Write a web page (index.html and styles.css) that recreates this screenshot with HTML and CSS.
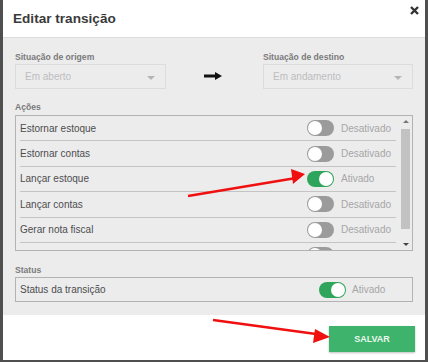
FILE: index.html
```html
<!DOCTYPE html>
<html lang="pt">
<head>
<meta charset="utf-8">
<link rel="stylesheet" href="styles.css">
</head>
<body>
<div class="modal">
  <div class="modal-header">
    <h1 class="title">Editar transição</h1>
    <svg class="close" width="9" height="9" viewBox="0 0 9 9"><path d="M1 1 L8 8 M8 1 L1 8" stroke="#333" stroke-width="2.4" stroke-linecap="butt"/></svg>
  </div>
  <div class="modal-body">
    <div class="states">
      <div class="field">
        <div class="label">Situação de origem</div>
        <div class="select"><span>Em aberto</span><i class="caret"></i></div>
      </div>
      <div class="arrow-col">
        <svg width="18" height="8" viewBox="0 0 18 8"><path d="M0 4 H12" stroke="#111" stroke-width="3"/><path d="M11 0 L18 4 L11 8 Z" fill="#111"/></svg>
      </div>
      <div class="field">
        <div class="label">Situação de destino</div>
        <div class="select"><span>Em andamento</span><i class="caret"></i></div>
      </div>
    </div>

    <div class="label section">Ações</div>
    <div class="list">
      <div class="rows">
        <div class="row"><span class="name">Estornar estoque</span><span class="switch"><i class="toggle"></i><span class="state">Desativado</span></span></div>
        <div class="row"><span class="name">Estornar contas</span><span class="switch"><i class="toggle"></i><span class="state">Desativado</span></span></div>
        <div class="row"><span class="name">Lançar estoque</span><span class="switch"><i class="toggle on"></i><span class="state">Ativado</span></span></div>
        <div class="row"><span class="name">Lançar contas</span><span class="switch"><i class="toggle"></i><span class="state">Desativado</span></span></div>
        <div class="row"><span class="name">Gerar nota fiscal</span><span class="switch"><i class="toggle"></i><span class="state">Desativado</span></span></div>
        <div class="row partial"><span class="name"></span><span class="switch"><i class="toggle"></i><span class="state"></span></span></div>
      </div>
      <div class="scrollbar">
        <i class="sb-up"></i>
        <div class="sb-track"><div class="sb-thumb"></div></div>
        <i class="sb-down"></i>
      </div>
    </div>

    <div class="label section status-label">Status</div>
    <div class="status-box">
      <span class="name">Status da transição</span>
      <span class="switch"><i class="toggle on"></i><span class="state">Ativado</span></span>
    </div>
  </div>
  <div class="modal-footer">
    <button class="save">SALVAR</button>
  </div>
  <svg class="annotations" width="422" height="362" viewBox="0 0 422 362">
    <g transform="translate(-3 0)">
      <path d="M188 196 L296 178" stroke="#f01010" stroke-width="2.6"/>
      <path d="M305 174 L291 169 L293 184 Z" fill="#f01010"/>
      <path d="M213 320 L316 334" stroke="#f01010" stroke-width="2.6"/>
      <path d="M330 337 L315 329 L313 343 Z" fill="#f01010"/>
    </g>
  </svg>
</div>
</body>
</html>
```

FILE: styles.css
```css
* { box-sizing: border-box; }
html, body { margin: 0; padding: 0; }
body {
  background: #4f4f4f;
  width: 428px;
  height: 362px;
  overflow: hidden;
  font-family: "Liberation Sans", Arial, sans-serif;
}
.modal {
  position: relative;
  margin: 0 3px;
  width: 422px;
  height: 360px;
  background: #fff;
  display: flex;
  flex-direction: column;
}
.modal-header {
  position: relative;
  height: 38px;
  border-bottom: 1px solid #dcdcdc;
  padding: 10px 0 0 10px;
}
.title {
  margin: 0;
  font-size: 13.6px;
  font-weight: bold;
  color: #3a3a3a;
  line-height: 17px;
}
.close {
  position: absolute;
  right: 6px;
  top: 6px;
}
.modal-body {
  background: #ececed;
  padding: 13px 12px 13px 12px;
  height: 277px;
}
.label {
  font-size: 8.6px;
  font-weight: bold;
  color: #7a7a7a;
  line-height: 12px;
  margin-bottom: 1px;
}
.states {
  display: grid;
  grid-template-columns: 151px 1fr 150px;
}
.select {
  height: 25px;
  border: 1px solid #dcdcdc;
  background: #ececed;
  display: flex;
  align-items: center;
  justify-content: space-between;
  padding: 0 10px 0 9px;
  font-size: 10px;
  color: #bdbdbd;
}
.caret {
  width: 0; height: 0;
  border-left: 4px solid transparent;
  border-right: 4px solid transparent;
  border-top: 4px solid #b5b5b5;
  margin-top: 2px;
}
.arrow-col {
  display: flex;
  align-items: flex-end;
  justify-content: center;
  padding-bottom: 9px;
  padding-right: 3px;
}
.section {
  margin-top: 12px;
  margin-bottom: 2px;
}
.status-label {
  margin-top: 13px;
  margin-bottom: 1px;
}
.list {
  height: 136px;
  border: 1px solid #b3b3b3;
  display: flex;
  overflow: hidden;
}
.rows {
  flex: 1;
  padding: 0 3px 0 4px;
  overflow: hidden;
}
.row {
  height: 25.4px;
  border-bottom: 1px solid #c4c4c4;
  display: flex;
  align-items: center;
  justify-content: space-between;
}
.name {
  font-size: 10px;
  color: #4d4d4d;
}
.switch {
  display: flex;
  align-items: center;
  gap: 7px;
}
.state {
  width: 55px;
  font-size: 10px;
  color: #a6a6a6;
}
.toggle {
  position: relative;
  width: 27px;
  height: 16px;
  border-radius: 8px;
  background: #9b9b9b;
}
.toggle::after {
  content: "";
  position: absolute;
  left: 1px;
  top: 1px;
  width: 14px;
  height: 14px;
  border-radius: 50%;
  background: #fff;
}
.toggle.on { background: #2ea55a; }
.toggle.on::after { left: 12px; }
.scrollbar {
  width: 13px;
  display: flex;
  flex-direction: column;
  align-items: center;
  padding: 4px 0 4px 0;
}
.sb-up, .sb-down {
  width: 0; height: 0;
  border-left: 3px solid transparent;
  border-right: 3px solid transparent;
}
.sb-up { border-bottom: 3px solid #777; }
.sb-down { border-top: 3px solid #444; }
.sb-track {
  flex: 1;
  width: 9px;
  padding: 6px 0 14px;
}
.sb-thumb {
  height: 100%;
  background: #c2c2c2;
}
.status-box {
  height: 25px;
  border: 1px solid #b3b3b3;
  display: flex;
  align-items: center;
  justify-content: space-between;
  padding: 0 5px 0 4px;
}
.status-box .switch { gap: 6px; }
.modal-footer {
  flex: 1;
  display: flex;
  justify-content: flex-end;
  align-items: flex-start;
  padding: 11px 10px 0 0;
}
.save {
  width: 86px;
  height: 26px;
  border: 0;
  background: #3db36b;
  color: #eaf7ee;
  font-family: "Liberation Sans", Arial, sans-serif;
  font-size: 9px;
  font-weight: bold;
  box-shadow: 0 1px 2px rgba(0,0,0,0.25);
}
.annotations {
  position: absolute;
  left: 0;
  top: 0;
  pointer-events: none;
}
```
